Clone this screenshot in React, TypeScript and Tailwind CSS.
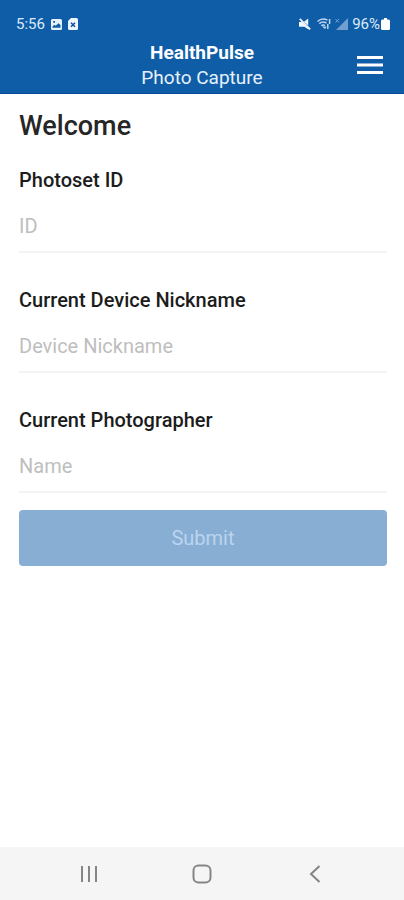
import React from "react";

type FieldProps = { id: string; label: string; placeholder: string };

function Field({ id, label, placeholder }: FieldProps) {
  return (
    <div className="flex flex-col gap-2">
      <label htmlFor={id} className="text-[20px] leading-6 font-medium text-[#1c1c1c]">
        {label}
      </label>
      <input
        id={id}
        type="text"
        placeholder={placeholder}
        className="h-[53px] w-full border-b-2 border-[#f3f3f3] bg-transparent text-[20px] leading-6 text-[#1c1c1c] outline-none placeholder:text-[#bebebe]"
      />
    </div>
  );
}

function StatusBar() {
  return (
    <div className="flex h-8 items-center justify-between pt-4 pr-[14px] pl-4 text-[15px] leading-4 text-[#dcebfb]">
      <div className="flex items-center gap-[6px]">
        <span>5:56</span>
        <svg width="11" height="11" viewBox="0 0 11 11" aria-hidden="true">
          <path
            fill="#e6f1fd"
            fillRule="evenodd"
            d="M1.5 0h8A1.5 1.5 0 0 1 11 1.500v8A1.500 1.500 0 0 1 9.500 11h-8A1.500 1.500 0 0 1 0 9.500v-8A1.500 1.500 0 0 1 1.500 0zM1.500 8.800h8V6L7.300 4.200 4.800 6.800 3.400 5.700 1.500 7.400zM2.200 2v1.800h1.800V2z"
          />
        </svg>
        <svg width="10" height="12" viewBox="0 0 10 12" aria-hidden="true">
          <path fill="#eef6ff" d="M3 0h5.500A1.500 1.500 0 0 1 10 1.500v9A1.500 1.500 0 0 1 8.500 12h-7A1.500 1.500 0 0 1 0 10.500V3z" />
          <path d="M3 4.800l4 4M7 4.800l-4 4" stroke="#0f4f98" strokeWidth="1.500" />
        </svg>
      </div>
      <div className="flex items-center">
        <svg className="mr-[6px]" width="12" height="12" viewBox="0 0 12 12" aria-hidden="true">
          <path fill="#f0f7ff" d="M0 4h3L9.500 10.200V11.500L5.400 8.800H0zM5 3.800 9.200 0.400v7z" />
          <path d="M0.800 0.800l10.400 10.600" stroke="#f0f7ff" strokeWidth="1.700" />
        </svg>
        <svg className="mr-1" width="14" height="12" viewBox="0 0 14 12" aria-hidden="true" fill="none" stroke="#b9d6f3">
          <path d="M0.500 3.500C3.500 0.800 7.500 0.600 10.500 2.200M2.300 5.600c2.200-2 5-2 7.200-0.500M4.300 7.700c1.200-1 2.500-1 3.700-0.100" strokeWidth="1.500" />
          <path d="M5 8.500h4.500L8 11z" fill="#b9d6f3" stroke="none" />
          <path d="M12.600 1v5M10.800 6v5" strokeWidth="1.500" />
        </svg>
        <svg className="mr-1" width="13" height="12" viewBox="0 0 13 12" aria-hidden="true">
          <path d="M13 0v12H1z" fill="#709fd0" />
          <path d="M0.500 1l3.500 3.500M4 1 0.500 4.500" stroke="#709fd0" />
        </svg>
        <span>96%</span>
        <svg className="ml-px" width="9" height="12" viewBox="0 0 9 12" aria-hidden="true">
          <path fill="#fff" d="M3 0h3v1.500h1.500A1.500 1.500 0 0 1 9 3v7.500A1.500 1.500 0 0 1 7.500 12h-6A1.500 1.500 0 0 1 0 10.500V3a1.500 1.500 0 0 1 1.500-1.500H3z" />
        </svg>
      </div>
    </div>
  );
}

export default function App() {
  return (
    <div className="flex min-h-screen flex-col bg-white font-[Roboto,sans-serif]">
      <header className="border-b border-[#0b4a99] bg-[#105da7]">
        <StatusBar />
        <div className="grid grid-cols-[1fr_auto_1fr] items-center px-4 pt-2 pb-[3px]">
          <h1 className="col-start-2 text-center text-[19px] leading-[25px] text-[#e6f1fd]">
            <span className="block font-bold text-white">HealthPulse</span>
            <span className="block">Photo Capture</span>
          </h1>
          <button type="button" aria-label="Menu" className="flex h-9 w-9 items-center justify-center justify-self-end">
            <svg width="26" height="18" viewBox="0 0 26 18" aria-hidden="true">
              <path d="M0 1.500h26M0 9h26M0 16.500h26" stroke="#fff" strokeWidth="3" />
            </svg>
          </button>
        </div>
      </header>

      <main className="flex-1 pt-4 pr-[17px] pl-[19px]">
        <h2 className="text-[27px] leading-8 font-medium text-[#262626]">Welcome</h2>
        <form className="mt-[26px]">
          <div className="flex flex-col gap-[35px]">
            <Field id="photoset" label="Photoset ID" placeholder="ID" />
            <Field id="device" label="Current Device Nickname" placeholder="Device Nickname" />
            <Field id="photographer" label="Current Photographer" placeholder="Name" />
          </div>
          <button type="submit" disabled className="mt-[17px] h-14 w-full rounded-[4px] bg-[#88aed4] text-[20px] leading-6 text-[#bbd4ef]">
            Submit
          </button>
        </form>
      </main>

      <nav aria-label="System" className="flex h-[53px] items-center justify-center gap-[77px] bg-[#f5f5f5] pt-px">
        <button type="button" aria-label="Recent apps" className="flex w-9 justify-center">
          <svg width="18" height="18" viewBox="0 0 18 18" aria-hidden="true">
            <path d="M2 1v16M9 1v16M16 1v16" stroke="#858585" strokeWidth="2" />
          </svg>
        </button>
        <button type="button" aria-label="Home" className="flex w-9 justify-center">
          <svg width="20" height="20" viewBox="0 0 20 20" aria-hidden="true">
            <rect x="1.500" y="1.500" width="17" height="17" rx="5" fill="none" stroke="#858585" strokeWidth="2" />
          </svg>
        </button>
        <button type="button" aria-label="Back" className="flex w-9 justify-center">
          <svg width="12" height="18" viewBox="0 0 12 18" aria-hidden="true">
            <path d="M10.500 1 2 9l8.500 8" fill="none" stroke="#858585" strokeWidth="2" />
          </svg>
        </button>
      </nav>
    </div>
  );
}
